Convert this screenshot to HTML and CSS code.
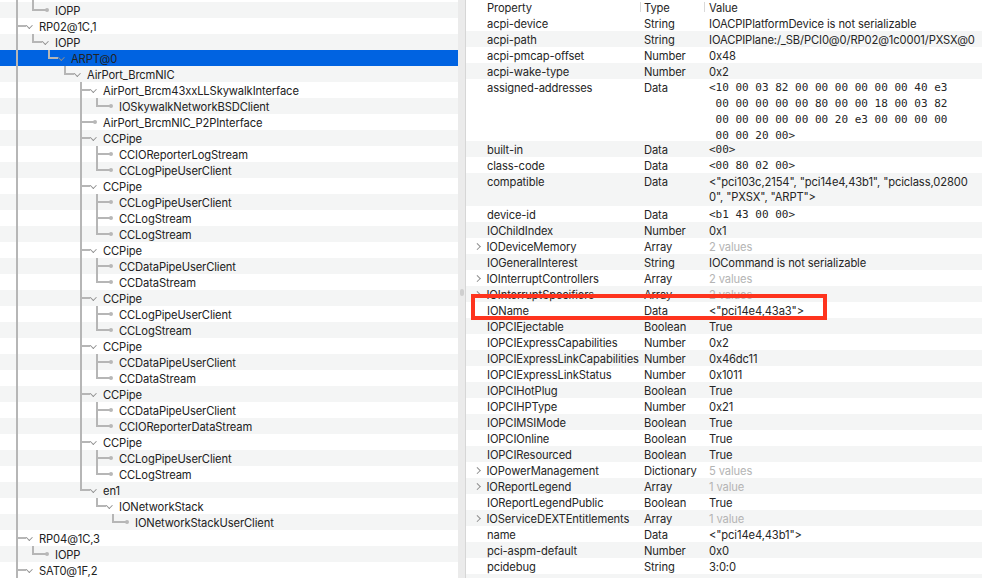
FILE: index.html
```html
<!DOCTYPE html>
<html>
<head>
<meta charset="utf-8">
<link rel="stylesheet" href="styles.css">
</head>
<body>
<div class="app">
  <div class="tree">
    <div class="node"><i class="g p"></i><i class="g p"></i></div>
    <div class="node"><i class="g p"></i><i class="c elbow"></i><i class="m dot"></i><span class="t">IOPP</span></div>
    <div class="node"><i class="c tee"></i><i class="m chev"></i><span class="t">RP02@1C,1</span></div>
    <div class="node"><i class="g p"></i><i class="c elbow"></i><i class="m chev"></i><span class="t">IOPP</span></div>
    <div class="node sel"><i class="g p"></i><i class="g"></i><i class="c elbow"></i><i class="m chev"></i><span class="t">ARPT@0</span></div>
    <div class="node"><i class="g p"></i><i class="g"></i><i class="g"></i><i class="c elbow"></i><i class="m chev"></i><span class="t">AirPort_BrcmNIC</span></div>
    <div class="node"><i class="g p"></i><i class="g"></i><i class="g"></i><i class="g"></i><i class="c tee"></i><i class="m chev"></i><span class="t">AirPort_Brcm43xxLLSkywalkInterface</span></div>
    <div class="node"><i class="g p"></i><i class="g"></i><i class="g"></i><i class="g"></i><i class="g p"></i><i class="c elbow"></i><i class="m dot"></i><span class="t">IOSkywalkNetworkBSDClient</span></div>
    <div class="node"><i class="g p"></i><i class="g"></i><i class="g"></i><i class="g"></i><i class="c tee"></i><i class="m dot"></i><span class="t">AirPort_BrcmNIC_P2PInterface</span></div>
    <div class="node"><i class="g p"></i><i class="g"></i><i class="g"></i><i class="g"></i><i class="c tee"></i><i class="m chev"></i><span class="t">CCPipe</span></div>
    <div class="node"><i class="g p"></i><i class="g"></i><i class="g"></i><i class="g"></i><i class="g p"></i><i class="c tee"></i><i class="m dot"></i><span class="t">CCIOReporterLogStream</span></div>
    <div class="node"><i class="g p"></i><i class="g"></i><i class="g"></i><i class="g"></i><i class="g p"></i><i class="c elbow"></i><i class="m dot"></i><span class="t">CCLogPipeUserClient</span></div>
    <div class="node"><i class="g p"></i><i class="g"></i><i class="g"></i><i class="g"></i><i class="c tee"></i><i class="m chev"></i><span class="t">CCPipe</span></div>
    <div class="node"><i class="g p"></i><i class="g"></i><i class="g"></i><i class="g"></i><i class="g p"></i><i class="c tee"></i><i class="m dot"></i><span class="t">CCLogPipeUserClient</span></div>
    <div class="node"><i class="g p"></i><i class="g"></i><i class="g"></i><i class="g"></i><i class="g p"></i><i class="c tee"></i><i class="m dot"></i><span class="t">CCLogStream</span></div>
    <div class="node"><i class="g p"></i><i class="g"></i><i class="g"></i><i class="g"></i><i class="g p"></i><i class="c elbow"></i><i class="m dot"></i><span class="t">CCLogStream</span></div>
    <div class="node"><i class="g p"></i><i class="g"></i><i class="g"></i><i class="g"></i><i class="c tee"></i><i class="m chev"></i><span class="t">CCPipe</span></div>
    <div class="node"><i class="g p"></i><i class="g"></i><i class="g"></i><i class="g"></i><i class="g p"></i><i class="c tee"></i><i class="m dot"></i><span class="t">CCDataPipeUserClient</span></div>
    <div class="node"><i class="g p"></i><i class="g"></i><i class="g"></i><i class="g"></i><i class="g p"></i><i class="c elbow"></i><i class="m dot"></i><span class="t">CCDataStream</span></div>
    <div class="node"><i class="g p"></i><i class="g"></i><i class="g"></i><i class="g"></i><i class="c tee"></i><i class="m chev"></i><span class="t">CCPipe</span></div>
    <div class="node"><i class="g p"></i><i class="g"></i><i class="g"></i><i class="g"></i><i class="g p"></i><i class="c tee"></i><i class="m dot"></i><span class="t">CCLogPipeUserClient</span></div>
    <div class="node"><i class="g p"></i><i class="g"></i><i class="g"></i><i class="g"></i><i class="g p"></i><i class="c elbow"></i><i class="m dot"></i><span class="t">CCLogStream</span></div>
    <div class="node"><i class="g p"></i><i class="g"></i><i class="g"></i><i class="g"></i><i class="c tee"></i><i class="m chev"></i><span class="t">CCPipe</span></div>
    <div class="node"><i class="g p"></i><i class="g"></i><i class="g"></i><i class="g"></i><i class="g p"></i><i class="c tee"></i><i class="m dot"></i><span class="t">CCDataPipeUserClient</span></div>
    <div class="node"><i class="g p"></i><i class="g"></i><i class="g"></i><i class="g"></i><i class="g p"></i><i class="c elbow"></i><i class="m dot"></i><span class="t">CCDataStream</span></div>
    <div class="node"><i class="g p"></i><i class="g"></i><i class="g"></i><i class="g"></i><i class="c tee"></i><i class="m chev"></i><span class="t">CCPipe</span></div>
    <div class="node"><i class="g p"></i><i class="g"></i><i class="g"></i><i class="g"></i><i class="g p"></i><i class="c tee"></i><i class="m dot"></i><span class="t">CCDataPipeUserClient</span></div>
    <div class="node"><i class="g p"></i><i class="g"></i><i class="g"></i><i class="g"></i><i class="g p"></i><i class="c elbow"></i><i class="m dot"></i><span class="t">CCIOReporterDataStream</span></div>
    <div class="node"><i class="g p"></i><i class="g"></i><i class="g"></i><i class="g"></i><i class="c tee"></i><i class="m chev"></i><span class="t">CCPipe</span></div>
    <div class="node"><i class="g p"></i><i class="g"></i><i class="g"></i><i class="g"></i><i class="g p"></i><i class="c tee"></i><i class="m dot"></i><span class="t">CCLogPipeUserClient</span></div>
    <div class="node"><i class="g p"></i><i class="g"></i><i class="g"></i><i class="g"></i><i class="g p"></i><i class="c elbow"></i><i class="m dot"></i><span class="t">CCLogStream</span></div>
    <div class="node"><i class="g p"></i><i class="g"></i><i class="g"></i><i class="g"></i><i class="c elbow"></i><i class="m chev"></i><span class="t">en1</span></div>
    <div class="node"><i class="g p"></i><i class="g"></i><i class="g"></i><i class="g"></i><i class="g"></i><i class="c elbow"></i><i class="m chev"></i><span class="t">IONetworkStack</span></div>
    <div class="node"><i class="g p"></i><i class="g"></i><i class="g"></i><i class="g"></i><i class="g"></i><i class="g"></i><i class="c elbow"></i><i class="m dot"></i><span class="t">IONetworkStackUserClient</span></div>
    <div class="node"><i class="c tee"></i><i class="m chev"></i><span class="t">RP04@1C,3</span></div>
    <div class="node"><i class="g p"></i><i class="c elbow"></i><i class="m dot"></i><span class="t">IOPP</span></div>
    <div class="node"><i class="c tee"></i><i class="m chev"></i><span class="t">SAT0@1F,2</span></div>
  </div>
  <div class="track"><i class="knob"></i></div>
  <div class="split"></div>
  <div class="props">
    <div class="hdr">
      <div class="hc">Property</div>
      <div class="hc sep">Type</div>
      <div class="hc sep v">Value</div>
    </div>
    <div class="rows">
      <div class="r"><div class="pc">acpi-device</div><div class="tc">String</div><div class="vc">IOACPIPlatformDevice is not serializable</div></div>
      <div class="r"><div class="pc">acpi-path</div><div class="tc">String</div><div class="vc">IOACPIPlane:/_SB/PCI0@0/RP02@1c0001/PXSX@0</div></div>
      <div class="r"><div class="pc">acpi-pmcap-offset</div><div class="tc">Number</div><div class="vc">0x48</div></div>
      <div class="r"><div class="pc">acpi-wake-type</div><div class="tc">Number</div><div class="vc">0x2</div></div>
      <div class="r tall4"><div class="pc">assigned-addresses</div><div class="tc">Data</div><div class="vc mono pre">&lt;10 00 03 82 00 00 00 00 00 00 40 e3
 00 00 00 00 00 80 00 00 18 00 03 82
 00 00 00 00 00 00 20 e3 00 00 00 00
 00 00 20 00&gt;</div></div>
      <div class="r"><div class="pc">built-in</div><div class="tc">Data</div><div class="vc mono">&lt;00&gt;</div></div>
      <div class="r"><div class="pc">class-code</div><div class="tc">Data</div><div class="vc mono">&lt;00 80 02 00&gt;</div></div>
      <div class="r tall2"><div class="pc">compatible</div><div class="tc">Data</div><div class="vc pre">&lt;"pci103c,2154", "pci14e4,43b1", "pciclass,02800
0", "PXSX", "ARPT"&gt;</div></div>
      <div class="r"><div class="pc">device-id</div><div class="tc">Data</div><div class="vc mono">&lt;b1 43 00 00&gt;</div></div>
      <div class="r"><div class="pc">IOChildIndex</div><div class="tc">Number</div><div class="vc">0x1</div></div>
      <div class="r"><div class="pc x">IODeviceMemory</div><div class="tc">Array</div><div class="vc muted">2 values</div></div>
      <div class="r"><div class="pc">IOGeneralInterest</div><div class="tc">String</div><div class="vc">IOCommand is not serializable</div></div>
      <div class="r"><div class="pc x">IOInterruptControllers</div><div class="tc">Array</div><div class="vc muted">2 values</div></div>
      <div class="r"><div class="pc x">IOInterruptSpecifiers</div><div class="tc">Array</div><div class="vc muted">2 values</div></div>
      <div class="r mark"><div class="pc">IOName</div><div class="tc">Data</div><div class="vc">&lt;"pci14e4,43a3"&gt;</div></div>
      <div class="r"><div class="pc">IOPCIEjectable</div><div class="tc">Boolean</div><div class="vc">True</div></div>
      <div class="r"><div class="pc">IOPCIExpressCapabilities</div><div class="tc">Number</div><div class="vc">0x2</div></div>
      <div class="r"><div class="pc">IOPCIExpressLinkCapabilities</div><div class="tc">Number</div><div class="vc">0x46dc11</div></div>
      <div class="r"><div class="pc">IOPCIExpressLinkStatus</div><div class="tc">Number</div><div class="vc">0x1011</div></div>
      <div class="r"><div class="pc">IOPCIHotPlug</div><div class="tc">Boolean</div><div class="vc">True</div></div>
      <div class="r"><div class="pc">IOPCIHPType</div><div class="tc">Number</div><div class="vc">0x21</div></div>
      <div class="r"><div class="pc">IOPCIMSIMode</div><div class="tc">Boolean</div><div class="vc">True</div></div>
      <div class="r"><div class="pc">IOPCIOnline</div><div class="tc">Boolean</div><div class="vc">True</div></div>
      <div class="r"><div class="pc">IOPCIResourced</div><div class="tc">Boolean</div><div class="vc">True</div></div>
      <div class="r"><div class="pc x">IOPowerManagement</div><div class="tc">Dictionary</div><div class="vc muted">5 values</div></div>
      <div class="r"><div class="pc x">IOReportLegend</div><div class="tc">Array</div><div class="vc muted">1 value</div></div>
      <div class="r"><div class="pc">IOReportLegendPublic</div><div class="tc">Boolean</div><div class="vc">True</div></div>
      <div class="r"><div class="pc x">IOServiceDEXTEntitlements</div><div class="tc">Array</div><div class="vc muted">1 value</div></div>
      <div class="r"><div class="pc">name</div><div class="tc">Data</div><div class="vc">&lt;"pci14e4,43b1"&gt;</div></div>
      <div class="r"><div class="pc">pci-aspm-default</div><div class="tc">Number</div><div class="vc">0x0</div></div>
      <div class="r"><div class="pc">pcidebug</div><div class="tc">String</div><div class="vc">3:0:0</div></div>
      <div class="r"><div class="pc"></div><div class="tc"></div><div class="vc"></div></div>
    </div>
  </div>
</div>
</body>
</html>
```

FILE: styles.css
```css
html, body {
  margin: 0;
  padding: 0;
  background: #fff;
  overflow: hidden;
}

.app {
  --ln: #b6b6b6;
  --stripe: #f4f5f5;
  display: flex;
  width: 982px;
  height: 578px;
  overflow: hidden;
  font-family: "Inter", "Liberation Sans", sans-serif;
  font-size: 11.2px;
  letter-spacing: -0.12px;
  color: #222;
}

/* ---------- left tree ---------- */
.tree {
  width: 458px;
  flex: none;
  margin-top: -14px;
}

.node {
  display: flex;
  align-items: flex-start;
  height: 16px;
  padding-left: 9px;
  white-space: nowrap;
}

.node:nth-child(even) {
  background-color: var(--stripe);
}

.node.sel {
  background-color: #0063e1;
}

.node i {
  display: block;
  flex: none;
  height: 16px;
}

.g {
  width: 16px;
}

.g.p {
  background: linear-gradient(var(--ln), var(--ln)) 7px 0 / 2px 16px no-repeat;
}

.c {
  width: 16px;
}

.c.tee {
  background:
    linear-gradient(var(--ln), var(--ln)) 7px 0 / 2px 16px no-repeat,
    linear-gradient(var(--ln), var(--ln)) 7px 7px / 9px 2px no-repeat;
}

.c.elbow {
  background:
    linear-gradient(var(--ln), var(--ln)) 7px 0 / 2px 9px no-repeat,
    linear-gradient(var(--ln), var(--ln)) 7px 7px / 9px 2px no-repeat;
}

.m {
  width: 14px;
}

.m.chev {
  background: linear-gradient(var(--ln), var(--ln)) 0 7px / 1px 2px no-repeat;
}

.m.chev::after {
  content: "";
  display: block;
  width: 3.6px;
  height: 3.6px;
  margin: 4.8px 0 0 2.4px;
  border-right: 1.3px solid #8d8d8d;
  border-bottom: 1.3px solid #8d8d8d;
  transform: rotate(45deg);
}

.m.dot {
  background: linear-gradient(var(--ln), var(--ln)) 0 7px / 5px 2px no-repeat;
}

.m.dot::after {
  content: "";
  display: block;
  width: 4px;
  height: 4px;
  margin: 6px 0 0 4px;
  border-radius: 50%;
  background: #b8b8b8;
}

.t {
  height: 16px;
  line-height: 18.5px;
}

/* ---------- divider ---------- */
.track {
  width: 7px;
  flex: none;
  background: #ebebeb;
}

.knob {
  display: block;
  width: 4px;
  height: 7px;
  margin: 289px 0 0 2px;
  border-radius: 2px;
  background: #cfcfcf;
}

.split {
  width: 1px;
  flex: none;
  background: #d6d6d6;
}

/* ---------- properties ---------- */
.props {
  flex: 1;
  min-width: 0;
  color: #262626;
}

.hdr,
.r {
  display: grid;
  grid-template-columns: 174px 64px 1fr;
}

.hdr {
  height: 16px;
  margin-top: -1px;
  line-height: 18px;
}

.hc {
  padding-left: 21px;
}

.hc.sep {
  padding-left: 4px;
  background: linear-gradient(#d9d9d9, #d9d9d9) 0 3px / 1px 10px no-repeat;
}

.hc.sep.v {
  padding-left: 5px;
}

.r {
  height: 16px;
  line-height: 18px;
  white-space: nowrap;
}

.rows .r:nth-child(even) {
  background-color: var(--stripe);
}

.pc {
  display: flex;
  padding-left: 8px;
}

.pc::before {
  content: "";
  flex: none;
  width: 13px;
}

.pc.x::before {
  width: 3.6px;
  height: 3.6px;
  margin: 6.4px 6.5px 0 1.4px;
  border-top: 1.3px solid #8d8d8d;
  border-right: 1.3px solid #8d8d8d;
  transform: rotate(45deg);
}

.tc {
  padding-left: 4px;
}

.vc {
  padding-left: 5px;
  overflow: hidden;
}

.vc.mono {
  font-family: "DejaVu Sans Mono", "Liberation Mono", monospace;
  font-size: 11px;
  letter-spacing: 0;
}

.vc.pre {
  white-space: pre;
  line-height: 15.5px;
  padding-top: 1.5px;
}

.vc.mono.pre {
  line-height: 16px;
  padding-top: 1px;
}

.vc.muted {
  color: #b4b4b4;
}

.r.tall4 {
  height: 62px;
}

.r.tall2 {
  height: 33px;
}

.r.mark {
  position: relative;
}

.r.mark::after {
  content: "";
  position: absolute;
  left: 5px;
  top: -8px;
  width: 348px;
  height: 18px;
  border: 4px solid #fe341e;
  pointer-events: none;
}
```
